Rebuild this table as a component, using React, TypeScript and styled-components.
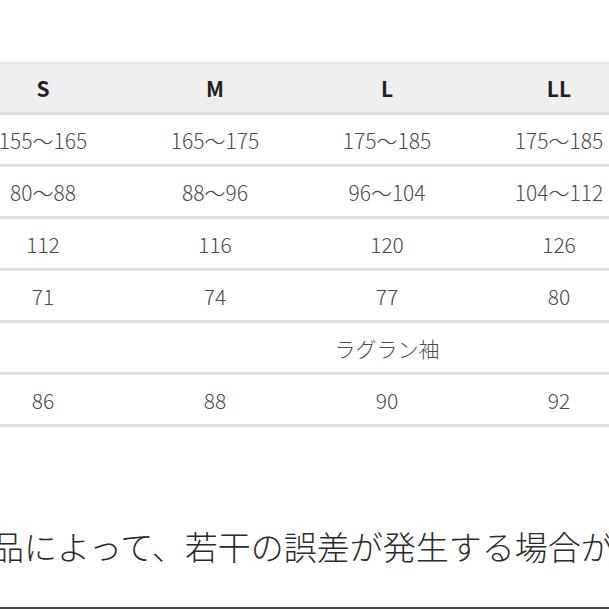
import React from 'react';
import styled, {createGlobalStyle} from 'styled-components';

const GlobalStyle = createGlobalStyle`
  html, body {
    margin: 0;
    padding: 0;
    background: #ffffff;
  }
  body {
    width: 609px;
    height: 609px;
    overflow: hidden;
    font-family: "Noto Sans CJK JP", "Noto Sans", sans-serif;
  }
`;

const Page = styled.div`
  position: relative;
  width: 609px;
  height: 609px;
  overflow: hidden;
  padding-top: 62px;
  box-sizing: border-box;
  display: flex;
  flex-direction: column;
`;

const Table = styled.div`
  width: 688px;
  margin-left: -43px;
  display: flex;
  flex-direction: column;
`;

const HeaderRow = styled.div`
  display: grid;
  grid-template-columns: repeat(4, 172px);
  height: 48px;
  align-items: center;
  background: #efefef;
  border-top: 2px solid #e6e6e6;
  border-bottom: 3px solid #dcdcdc;
`;

const HeaderCell = styled.div`
  text-align: center;
  font-size: 21px;
  font-weight: 700;
  color: #1e1e1e;
`;

const Row = styled.div`
  display: grid;
  grid-template-columns: repeat(4, 172px);
  height: 49px;
  align-items: center;
  border-bottom: 3px solid #e0e0e0;
`;

const Cell = styled.div<{span?: number}>`
  grid-column: ${(props) => (props.span ? `span ${props.span}` : 'auto')};
  text-align: center;
  font-size: 21px;
  font-weight: 300;
  color: #4a4a4a;
  white-space: nowrap;
`;

const Note = styled.div`
  margin-top: 97px;
  margin-left: -9px;
  font-size: 33px;
  font-weight: 300;
  color: #2a2a2a;
  white-space: nowrap;
  line-height: 44px;
`;

const BottomRule = styled.div`
  position: absolute;
  left: 0;
  right: 0;
  bottom: 0;
  height: 2px;
  background: #454545;
`;

const sizes = ['S', 'M', 'L', 'LL'];

const rows: string[][] = [
  ['155〜165', '165〜175', '175〜185', '175〜185'],
  ['80〜88', '88〜96', '96〜104', '104〜112'],
  ['112', '116', '120', '126'],
  ['71', '74', '77', '80'],
];

const sleeveRow = ['86', '88', '90', '92'];

const App = (): JSX.Element => {
  return (
    <>
      <GlobalStyle />
      <Page>
        <Table>
          <HeaderRow>
            {sizes.map((size) => (
              <HeaderCell key={size}>{size}</HeaderCell>
            ))}
          </HeaderRow>
          {rows.map((row, i) => (
            <Row key={i}>
              {row.map((value, j) => (
                <Cell key={j}>{value}</Cell>
              ))}
            </Row>
          ))}
          <Row>
            <Cell span={2} />
            <Cell>ラグラン袖</Cell>
            <Cell />
          </Row>
          <Row>
            {sleeveRow.map((value, j) => (
              <Cell key={j}>{value}</Cell>
            ))}
          </Row>
        </Table>
        <Note>品によって、若干の誤差が発生する場合があります。</Note>
        <BottomRule />
      </Page>
    </>
  );
};

export default App;
